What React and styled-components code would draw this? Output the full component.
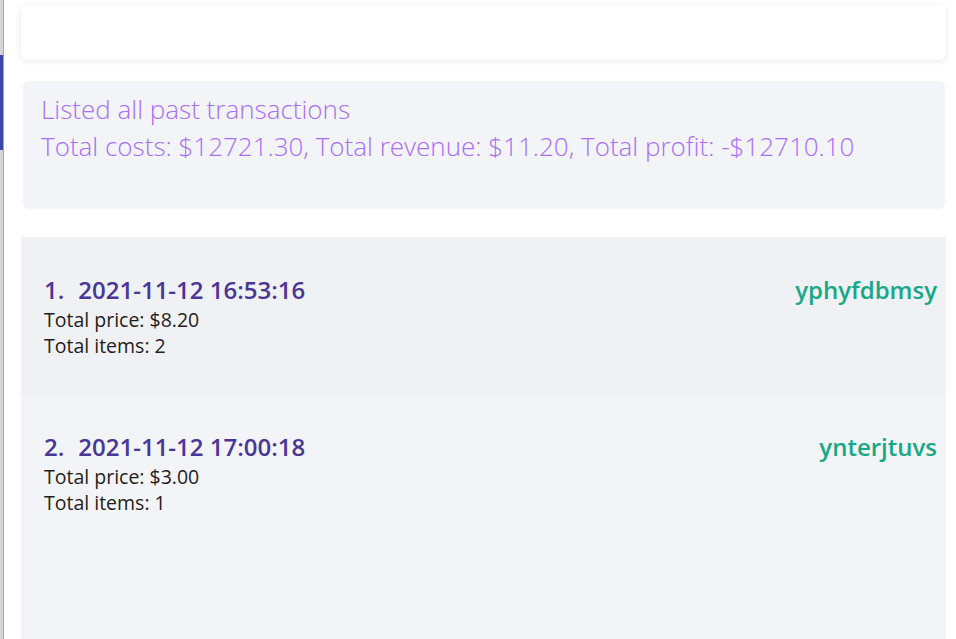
import styled, { createGlobalStyle } from "styled-components";

const GlobalStyle = createGlobalStyle`
  html, body {
    margin: 0;
    padding: 0;
    background: #ffffff;
    font-family: "Open Sans", "Noto Sans", sans-serif;
  }
`;

const transactions = [
  {
    id: 1,
    date: "2021-11-12 16:53:16",
    price: "$8.20",
    items: 2,
    tag: "yphyfdbmsy",
  },
  {
    id: 2,
    date: "2021-11-12 17:00:18",
    price: "$3.00",
    items: 1,
    tag: "ynterjtuvs",
  },
];

const App = () => {
  return (
    <>
      <GlobalStyle />
      <Page>
        <SideEdge>
          <SideTab />
        </SideEdge>
        <Main>
          <CommandBox />
          <ResultBox>
            <ResultLine>Listed all past transactions</ResultLine>
            <ResultLine>
              Total costs: $12721.30, Total revenue: $11.20, Total profit:
              -$12710.10
            </ResultLine>
          </ResultBox>
          <List>
            {transactions.map((t, i) => (
              <Row key={t.id} odd={i % 2 === 0}>
                <RowInfo>
                  <Title>
                    <Index>{t.id}.</Index>
                    {t.date}
                  </Title>
                  <Detail>Total price: {t.price}</Detail>
                  <Detail>Total items: {t.items}</Detail>
                </RowInfo>
                <Tag>{t.tag}</Tag>
              </Row>
            ))}
            <Filler />
          </List>
        </Main>
      </Page>
    </>
  );
};

const Page = styled.div`
  display: flex;
  height: 639px;
  overflow: hidden;
`;

const SideEdge = styled.div`
  width: 3px;
  flex-shrink: 0;
  background: #d6d3d8;
  border-right: 1px solid #a9a4ad;
  padding-top: 55px;
`;

const SideTab = styled.div`
  height: 95px;
  background: #3d47a6;
`;

const Main = styled.div`
  flex: 1;
  display: flex;
  flex-direction: column;
  padding: 5px 10px 0 17px;
`;

const CommandBox = styled.div`
  height: 55px;
  background: #ffffff;
  border-radius: 7px;
  box-shadow: 0 1px 6px rgba(0, 0, 0, 0.1);
`;

const ResultBox = styled.div`
  margin: 21px 1px 0 2px;
  height: 128px;
  box-sizing: border-box;
  padding: 10px 18px;
  background: #f3f4f8;
  border-radius: 6px;
`;

const ResultLine = styled.div`
  font-size: 26px;
  font-weight: 300;
  line-height: 37px;
  color: #a76ef6;
`;

const List = styled.div`
  margin-top: 28px;
  flex: 1;
  display: flex;
  flex-direction: column;
`;

const Row = styled.div`
  height: 157px;
  box-sizing: border-box;
  padding: 39px 9px 0 23px;
  display: flex;
  justify-content: space-between;
  align-items: flex-start;
  background: ${(p) => (p.odd ? "#eff1f5" : "#f3f4f8")};
`;

const RowInfo = styled.div`
  display: flex;
  flex-direction: column;
`;

const Title = styled.div`
  font-size: 24px;
  font-weight: 600;
  line-height: 28px;
  color: #4a3697;
  margin-bottom: 3px;
`;

const Index = styled.span`
  margin-right: 14px;
`;

const Detail = styled.div`
  font-size: 19.5px;
  line-height: 26px;
  color: #1e1e1e;
`;

const Tag = styled.div`
  font-size: 24px;
  font-weight: 600;
  line-height: 28px;
  color: #18a886;
`;

const Filler = styled.div`
  flex: 1;
  background: #f3f4f8;
`;

export default App;
